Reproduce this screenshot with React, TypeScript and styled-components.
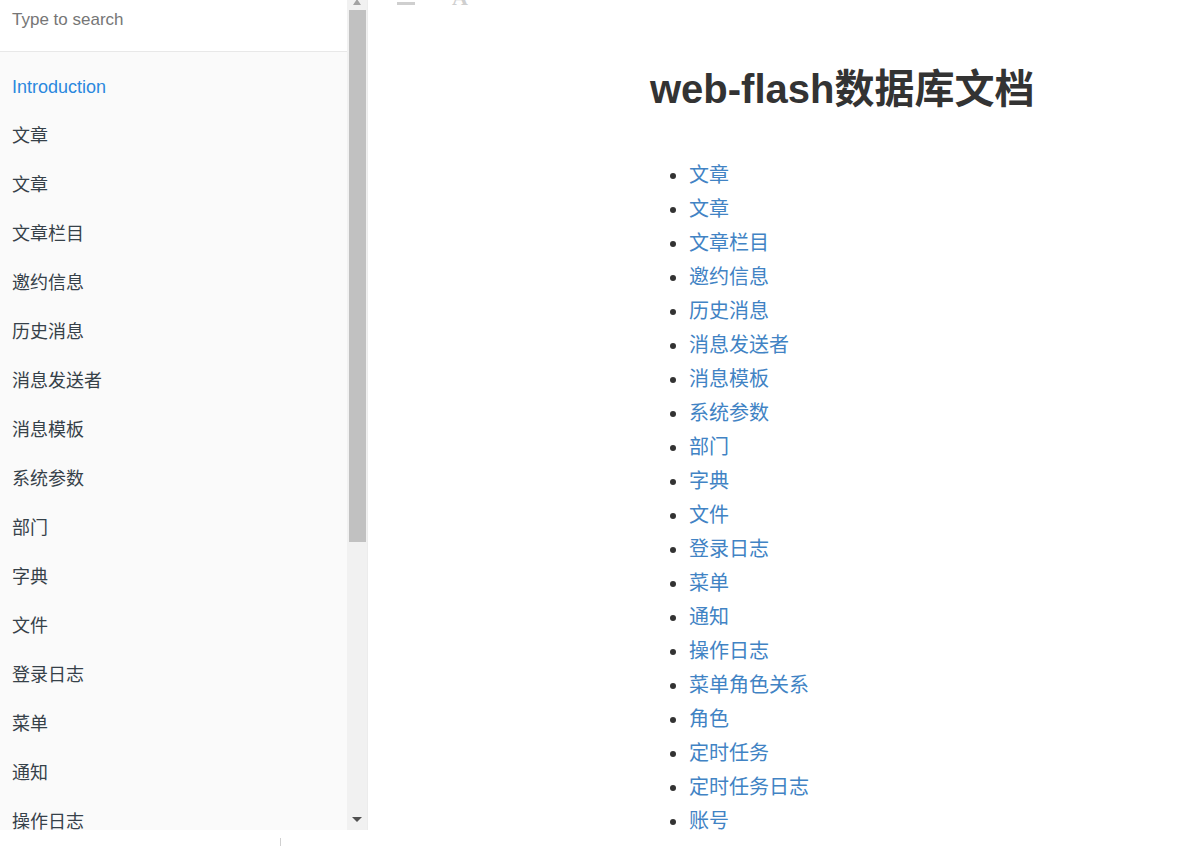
import React from "react";
import styled, { createGlobalStyle } from "styled-components";

const GlobalStyle = createGlobalStyle`
  html, body { margin: 0; padding: 0; background: #fff; }
  body {
    font-family: "Liberation Sans", Arial, "Noto Sans CJK SC", sans-serif;
    -webkit-font-smoothing: antialiased;
  }
  * { box-sizing: border-box; }
`;

const Page = styled.div`
  display: flex;
  width: 1204px;
  height: 846px;
  overflow: hidden;
`;

const LeftColumn = styled.div`
  display: flex;
  flex-direction: column;
  width: 368px;
  flex-shrink: 0;
`;

const Sidebar = styled.aside`
  display: flex;
  height: 830px;
  flex-shrink: 0;
  background: #fafafa;
  border-right: 1px solid #ececec;
  overflow: hidden;
`;

const SidebarBody = styled.div`
  display: flex;
  flex-direction: column;
  width: 347px;
  flex-shrink: 0;
`;

const SearchBox = styled.div`
  height: 52px;
  flex-shrink: 0;
  padding: 10px 12px 0;
  background: #fff;
  border-bottom: 1px solid #e8e8e8;
  font-size: 17px;
  line-height: 20px;
  color: #767676;
`;

const Summary = styled.ul`
  list-style: none;
  margin: 0;
  padding: 11px 0 0;
  flex-shrink: 0;
`;

const SummaryItem = styled.li<{ $active?: boolean }>`
  padding: 12px 12px;
  font-size: 18px;
  line-height: 25px;
  color: ${(p) => (p.$active ? "#2a88de" : "#364149")};
  white-space: nowrap;
`;

const Scrollbar = styled.div`
  position: relative;
  display: flex;
  flex-direction: column;
  align-items: center;
  width: 20px;
  flex-shrink: 0;
  background: #f1f1f1;
  padding-top: 10px;
  padding-bottom: 8px;
`;

const ArrowUp = styled.div`
  position: absolute;
  top: -1px;
  left: 6px;
  width: 0;
  height: 0;
  border-left: 4px solid transparent;
  border-right: 4px solid transparent;
  border-bottom: 6px solid #a3a3a3;
`;

const Thumb = styled.div`
  width: 17px;
  height: 532px;
  flex-shrink: 0;
  background: #c1c1c1;
`;

const ArrowDown = styled.div`
  margin-top: auto;
  width: 0;
  height: 0;
  border-left: 5px solid transparent;
  border-right: 5px solid transparent;
  border-top: 5px solid #505050;
`;

const BottomStrip = styled.div`
  flex: 1;
  display: flex;
  padding: 2px 0 0 280px;
`;

const Caret = styled.div`
  width: 1px;
  height: 14px;
  margin-top: 6px;
  background: #d0d0d0;
`;

const Main = styled.main`
  flex: 1;
  display: flex;
  flex-direction: column;
  min-width: 0;
`;

const Header = styled.header`
  display: flex;
  align-items: flex-end;
  height: 5px;
  flex-shrink: 0;
  padding-left: 29px;
  gap: 37px;
`;

const BarsIcon = styled.svg`
  display: block;
  width: 18px;
  height: 16px;
  flex-shrink: 0;
`;

const FontIcon = styled.span`
  display: block;
  font-family: "Liberation Serif", "Times New Roman", serif;
  font-weight: bold;
  font-size: 22px;
  line-height: 22px;
  color: #cfcfcf;
  margin-bottom: -4px;
`;

const Content = styled.section`
  padding: 20px 0 0 282px;
  color: #333;
`;

const Title = styled.h1`
  margin: 40px 0 45px;
  font-size: 40px;
  line-height: 48px;
  font-weight: bold;
  color: #333;
  white-space: nowrap;
`;

const TableList = styled.ul`
  margin: 0;
  padding: 0 0 0 1.95em;
  font-size: 20px;
  line-height: 34px;
  color: #333;
`;

const TableLink = styled.a`
  color: #4183c4;
  text-decoration: none;
`;

const tables = [
  "文章",
  "文章",
  "文章栏目",
  "邀约信息",
  "历史消息",
  "消息发送者",
  "消息模板",
  "系统参数",
  "部门",
  "字典",
  "文件",
  "登录日志",
  "菜单",
  "通知",
  "操作日志",
  "菜单角色关系",
  "角色",
  "定时任务",
  "定时任务日志",
  "账号",
];

const sidebarItems = tables.slice(0, 15);

export default function App() {
  return (
    <>
      <GlobalStyle />
      <Page>
        <LeftColumn>
          <Sidebar>
            <SidebarBody>
              <SearchBox>Type to search</SearchBox>
              <Summary>
                <SummaryItem $active>Introduction</SummaryItem>
                {sidebarItems.map((t, i) => (
                  <SummaryItem key={i}>{t}</SummaryItem>
                ))}
              </Summary>
            </SidebarBody>
            <Scrollbar>
              <ArrowUp />
              <Thumb />
              <ArrowDown />
            </Scrollbar>
          </Sidebar>
          <BottomStrip>
            <Caret />
          </BottomStrip>
        </LeftColumn>
        <Main>
          <Header>
            <BarsIcon viewBox="0 0 18 16">
              <rect x="0" y="0" width="18" height="3" fill="#cfcfcf" />
              <rect x="0" y="6.5" width="18" height="3" fill="#cfcfcf" />
              <rect x="0" y="13" width="18" height="3" fill="#cfcfcf" />
            </BarsIcon>
            <FontIcon>A</FontIcon>
          </Header>
          <Content>
            <Title>web-flash数据库文档</Title>
            <TableList>
              {tables.map((t, i) => (
                <li key={i}>
                  <TableLink href="#">{t}</TableLink>
                </li>
              ))}
            </TableList>
          </Content>
        </Main>
      </Page>
    </>
  );
}
